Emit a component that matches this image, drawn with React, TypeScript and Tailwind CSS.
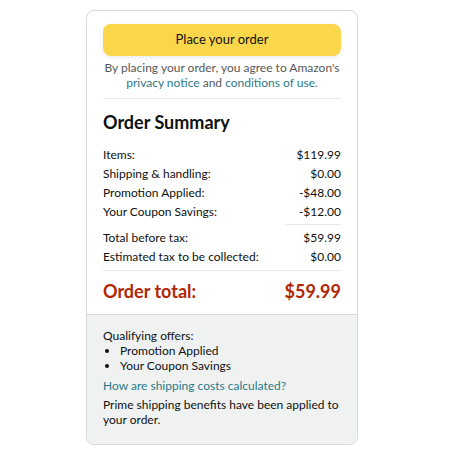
const rows = [
  { label: "Items:", value: "$119.99" },
  { label: "Shipping & handling:", value: "$0.00" },
  { label: "Promotion Applied:", value: "-$48.00" },
  { label: "Your Coupon Savings:", value: "-$12.00" },
];

const totals = [
  { label: "Total before tax:", value: "$59.99" },
  { label: "Estimated tax to be collected:", value: "$0.00" },
];

export default function App() {
  return (
    <div
      className="w-[450px] h-[450px] bg-white pt-[10px] pl-[86px]"
      style={{ fontFamily: "Lato, Arial, sans-serif" }}
    >
      <div className="w-[272px] border border-[#d5d9d9] rounded-[8px] overflow-hidden text-[#0f1111]">
        <div className="px-[16px] pt-[13px]">
          <button className="w-full h-[32px] rounded-[8px] bg-[#fad64b] text-[13px] shadow-[0_2px_5px_rgba(213,217,217,0.5)]">
            Place your order
          </button>
          <p className="mt-[4px] text-center text-[12px] leading-[15px] text-[#565959]">
            By placing your order, you agree to Amazon's{" "}
            <span className="text-[#2b7a8a]">privacy notice</span> and{" "}
            <span className="text-[#2b7a8a]">conditions of use</span>.
          </p>
          <div className="mt-[8px] border-t border-[#e7e7e7]" />
          <h2 className="mt-[11px] text-[18px] font-bold leading-[24px]">
            Order Summary
          </h2>
          <div className="mt-[11px] text-[12px] leading-[19px]">
            {rows.map((r) => (
              <div key={r.label} className="flex justify-between">
                <span>{r.label}</span>
                <span>{r.value}</span>
              </div>
            ))}
            <div className="flex justify-end my-[3px]">
              <div className="w-[55px] border-t border-[#e7e7e7]" />
            </div>
            {totals.map((r) => (
              <div key={r.label} className="flex justify-between">
                <span>{r.label}</span>
                <span>{r.value}</span>
              </div>
            ))}
          </div>
          <div className="mt-[4px] border-t border-[#e7e7e7]" />
          <div className="flex justify-between pt-[8px] pb-[11px] text-[18px] font-bold leading-[24px] text-[#b12704]">
            <span>Order total:</span>
            <span>$59.99</span>
          </div>
        </div>
        <div className="bg-[#f0f2f2] border-t border-[#d5d9d9] px-[16px] pt-[13px] pb-[17px] text-[12px] leading-[15px]">
          <p>Qualifying offers:</p>
          <ul className="list-disc pl-[17px]">
            <li>Promotion Applied</li>
            <li>Your Coupon Savings</li>
          </ul>
          <p className="mt-[5px] text-[#2b7a8a]">How are shipping costs calculated?</p>
          <p className="mt-[4px]">
            Prime shipping benefits have been applied to your order.
          </p>
        </div>
      </div>
    </div>
  );
}
